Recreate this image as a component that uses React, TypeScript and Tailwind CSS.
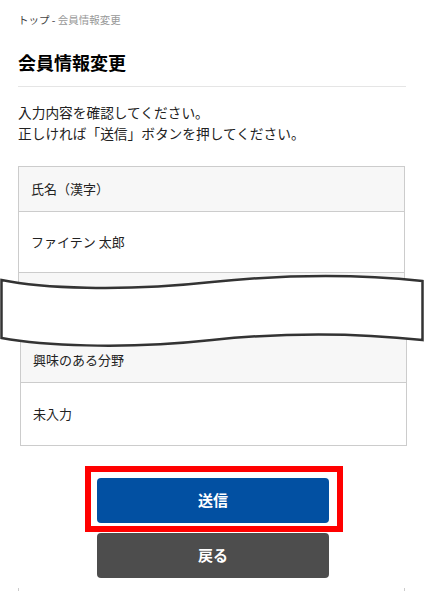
export default function App() {
  const font = { fontFamily: '"Noto Sans CJK JP", "Noto Sans", sans-serif' };

  return (
    <div className="relative w-[424px] h-[591px] overflow-hidden bg-white px-[18px] text-[#222]" style={font}>
      {/* breadcrumb */}
      <div className="pt-[13px] text-[10.5px] leading-[14px]">
        <span className="text-[#444]">トップ - </span>
        <span className="text-[#999]">会員情報変更</span>
      </div>

      {/* title */}
      <h1 className="mt-[22px] border-b border-[#e5e5e5] pb-[11px] text-[18px] font-bold leading-[26px] text-black">
        会員情報変更
      </h1>

      <p className="mt-[15px] text-[13.7px] leading-[21px] text-[#222]">
        入力内容を確認してください。
        <br />
        正しければ「送信」ボタンを押してください。
      </p>

      {/* confirm table (upper) */}
      <div className="mt-[22px] w-[387px] border-x border-t border-[#cccccc]">
        <div className="flex h-[45px] items-center border-b border-[#cccccc] bg-[#f7f7f7] px-[12px] text-[13px]">
          氏名（漢字）
        </div>
        <div className="flex h-[61px] items-center border-b border-[#cccccc] px-[12px] text-[13px]">
          ファイテン 太郎
        </div>
        <div className="h-[65px] bg-[#f7f7f7]" />
      </div>

      {/* confirm table (lower) */}
      <div className="ml-[2px] w-[387px] border-x border-b border-[#cccccc]">
        <div className="flex h-[45px] items-center border-b border-[#cccccc] bg-[#f7f7f7] px-[12px] text-[13px]">
          興味のある分野
        </div>
        <div className="flex h-[62px] items-center px-[12px] text-[13px]">未入力</div>
      </div>

      {/* buttons */}
      <div className="ml-[67px] mt-[20px] flex flex-col items-start">
        <div className="border-[6px] border-[#ff0000] pb-[3px] pl-[6px] pr-[8px] pt-[6px]">
          <button className="flex h-[45px] w-[232px] items-center justify-center rounded-[4px] bg-[#0250a2] text-[15px] font-bold text-white">
            送信
          </button>
        </div>
        <button className="ml-[12px] mt-[1px] flex h-[45px] w-[232px] items-center justify-center rounded-[4px] bg-[#4d4d4d] text-[15px] font-bold text-white">
          戻る
        </button>
      </div>

      <div className="mt-[10px] h-[20px] w-[387px] border-x border-[#cccccc]" />

      {/* omitted-section wave */}
      <svg
        className="absolute left-0 top-[270px]"
        width="424"
        height="82"
        viewBox="0 270 424 82"
      >
        <path
          d="M1.5 280 C40 288 120 292 212 282 C270 276 340 272 422.5 281 L422.5 340 C340 331 270 334 212 340 C120 350 40 345 1.5 338 Z"
          fill="#ffffff"
          stroke="#333333"
          strokeWidth="2.5"
          strokeLinejoin="miter"
        />
      </svg>
    </div>
  );
}
